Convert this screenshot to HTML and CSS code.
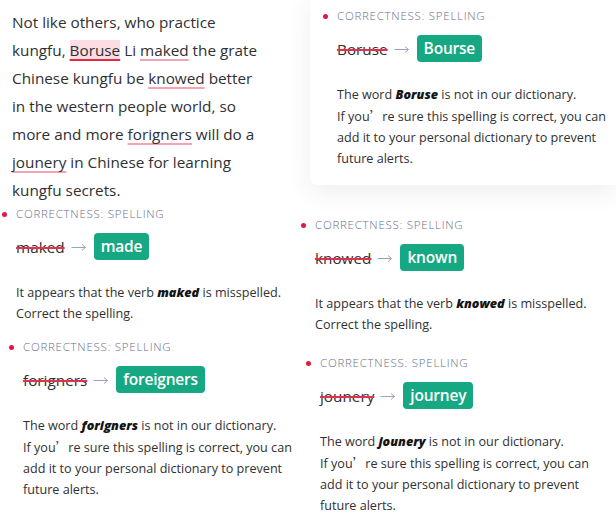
FILE: index.html
```html
<!DOCTYPE html>
<html>
<head>
<meta charset="utf-8">
<link rel="stylesheet" href="styles.css">
</head>
<body>
<div class="stage">
  <div class="col">
    <p class="essay">Not like others, who practice<br>kungfu, <span class="err active">Boruse</span> Li <span class="err">maked</span> the grate<br>Chinese kungfu be <span class="err">knowed</span> better<br>in the western people world, so<br>more and more <span class="err">forigners</span> will do a<br><span class="err">jounery</span> in Chinese for learning<br>kungfu secrets.</p>

    <div class="card c-maked">
      <div class="head"><span class="dot"></span>CORRECTNESS: SPELLING</div>
      <div class="row"><span class="wrong">maked</span><svg class="arrow" width="16" height="9" viewBox="0 0 16 9"><path d="M0.5 4.5H14.5M11 1.5L14.5 4.5L11 7.5" fill="none" stroke="#9ba2bd" stroke-width="1"/></svg><span class="badge">made</span></div>
      <p class="desc">It appears that the verb <b>maked</b> is misspelled.<br>Correct the spelling.</p>
    </div>

    <div class="card c-forigners">
      <div class="head"><span class="dot"></span>CORRECTNESS: SPELLING</div>
      <div class="row"><span class="wrong">forigners</span><svg class="arrow" width="16" height="9" viewBox="0 0 16 9"><path d="M0.5 4.5H14.5M11 1.5L14.5 4.5L11 7.5" fill="none" stroke="#9ba2bd" stroke-width="1"/></svg><span class="badge">foreigners</span></div>
      <p class="desc">The word <b>forigners</b> is not in our dictionary.<br>If you<span class="fw">’</span>re sure this spelling is correct, you can<br>add it to your personal dictionary to prevent<br>future alerts.</p>
    </div>
  </div>

  <div class="col">
    <div class="card pop c-boruse">
      <div class="head"><span class="dot"></span>CORRECTNESS: SPELLING</div>
      <div class="row"><span class="wrong">Boruse</span><svg class="arrow" width="16" height="9" viewBox="0 0 16 9"><path d="M0.5 4.5H14.5M11 1.5L14.5 4.5L11 7.5" fill="none" stroke="#9ba2bd" stroke-width="1"/></svg><span class="badge">Bourse</span></div>
      <p class="desc">The word <b>Boruse</b> is not in our dictionary.<br>If you<span class="fw">’</span>re sure this spelling is correct, you can<br>add it to your personal dictionary to prevent<br>future alerts.</p>
    </div>

    <div class="card c-knowed">
      <div class="head"><span class="dot"></span>CORRECTNESS: SPELLING</div>
      <div class="row"><span class="wrong">knowed</span><svg class="arrow" width="16" height="9" viewBox="0 0 16 9"><path d="M0.5 4.5H14.5M11 1.5L14.5 4.5L11 7.5" fill="none" stroke="#9ba2bd" stroke-width="1"/></svg><span class="badge">known</span></div>
      <p class="desc">It appears that the verb <b>knowed</b> is misspelled.<br>Correct the spelling.</p>
    </div>

    <div class="card c-jounery">
      <div class="head"><span class="dot"></span>CORRECTNESS: SPELLING</div>
      <div class="row"><span class="wrong">jounery</span><svg class="arrow" width="16" height="9" viewBox="0 0 16 9"><path d="M0.5 4.5H14.5M11 1.5L14.5 4.5L11 7.5" fill="none" stroke="#9ba2bd" stroke-width="1"/></svg><span class="badge">journey</span></div>
      <p class="desc">The word <b>jounery</b> is not in our dictionary.<br>If you<span class="fw">’</span>re sure this spelling is correct, you can<br>add it to your personal dictionary to prevent<br>future alerts.</p>
    </div>
  </div>
</div>
</body>
</html>
```

FILE: styles.css
```css
html, body {
  margin: 0;
  padding: 0;
  background: #ffffff;
}
body {
  width: 616px;
  height: 528px;
  overflow: hidden;
  font-family: "Open Sans", "Noto Sans", sans-serif;
  color: #2f3033;
}
.stage {
  display: grid;
  grid-template-columns: 300px 316px;
  align-items: start;
}
.col {
  display: flex;
  flex-direction: column;
  align-items: flex-start;
}
.essay {
  margin: 0;
  padding: 8px 0 0 12px;
  font-size: 15.3px;
  line-height: 28px;
  white-space: nowrap;
  color: #2f3033;
}
.err {
  text-decoration: underline;
  text-decoration-color: #f5a3b4;
  text-decoration-thickness: 2px;
  text-underline-offset: 3px;
  text-decoration-skip-ink: none;
}
.err.active {
  background: #fcdde4;
  text-decoration-color: #e52a44;
}
.card {
  white-space: nowrap;
}
.head {
  display: flex;
  align-items: center;
  gap: 9px;
  font-size: 11.5px;
  font-weight: 300;
  line-height: 16px;
  letter-spacing: 0.75px;
  color: #6c7087;
}
.dot {
  width: 5px;
  height: 5px;
  border-radius: 50%;
  background: #e5173f;
  flex: none;
}
.row {
  display: flex;
  align-items: center;
  gap: 6px;
  height: 27px;
  margin-top: 11px;
  padding-left: 14px;
}
.wrong {
  font-size: 15.3px;
  color: #2f3033;
  text-decoration: line-through;
  text-decoration-color: #e0314e;
  text-decoration-thickness: 1.5px;
}
.arrow {
  flex: none;
  margin-top: 1px;
}
.badge {
  height: 27px;
  line-height: 27px;
  padding: 0 7px;
  border-radius: 4px;
  background: #16a883;
  color: #ffffff;
  font-weight: 600;
  font-size: 15.5px;
  letter-spacing: -0.2px;
  margin-left: 1px;
}
.desc {
  margin: 22px 0 0;
  padding-left: 14px;
  font-size: 12.6px;
  line-height: 21px;
  color: #2f3033;
}
.desc b {
  font-style: italic;
  font-weight: 800;
  color: #141414;
}
.fw {
  font-family: "Noto Sans CJK SC", sans-serif;
}
.c-maked {
  margin-top: 2px;
  padding-left: 2px;
}
.c-forigners {
  margin-top: 15px;
  padding-left: 9px;
}
.pop {
  align-self: stretch;
  margin-left: 10px;
  padding: 8px 0 16px 13px;
  background: #ffffff;
  border-radius: 0 0 0 8px;
  box-shadow: 0 6px 26px rgba(40, 50, 110, 0.09);
}
.c-knowed {
  margin-top: 32px;
  padding-left: 1px;
}
.c-jounery {
  margin-top: 20px;
  padding-left: 6px;
}
```
